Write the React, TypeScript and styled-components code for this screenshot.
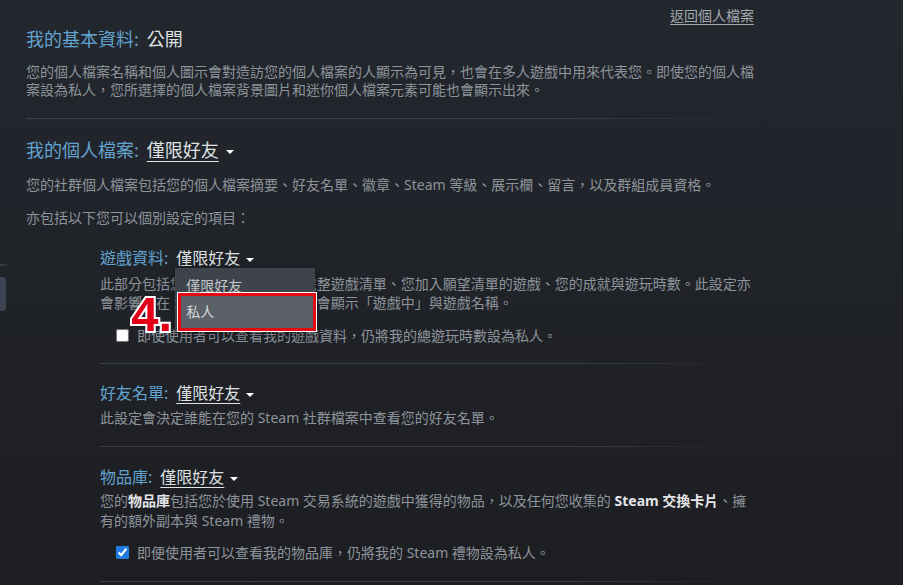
import React from "react";
import styled, { createGlobalStyle } from "styled-components";

const GlobalStyle = createGlobalStyle`
  html, body {
    margin: 0;
    padding: 0;
  }
  body {
    background: linear-gradient(to bottom, #23272e 0%, #1d1e22 100%);
    font-family: "Noto Sans", "Noto Sans CJK TC", sans-serif;
    overflow: hidden;
  }
`;

export default function App() {
  return (
    <>
      <GlobalStyle />
      <Page>
        <Rail>
          <RailLine />
          <RailTab />
        </Rail>
        <Main>
          <TopBar>
            <BackLink href="#">返回個人檔案</BackLink>
          </TopBar>

          <Heading $mt={1} $size={18}>
            <Label>我的基本資料:</Label>
            <Value>公開</Value>
          </Heading>
          <Desc $mt={12} $lh={18}>
            您的個人檔案名稱和個人圖示會對造訪您的個人檔案的人顯示為可見，也會在多人遊戲中用來代表您。即使您的個人檔
            <br />
            案設為私人，您所選擇的個人檔案背景圖片和迷你個人檔案元素可能也會顯示出來。
          </Desc>

          <Divider $mt={19} $width={728} />

          <Heading $mt={19} $size={18}>
            <Label>我的個人檔案:</Label>
            <Value $link>僅限好友</Value>
            <Caret $gap={7} />
          </Heading>
          <Desc $mt={14} $lh={18}>
            您的社群個人檔案包括您的個人檔案摘要、好友名單、徽章、Steam 等級、展示欄、留言，以及群組成員資格。
          </Desc>
          <Desc $mt={15} $lh={18}>
            亦包括以下您可以個別設定的項目：
          </Desc>

          <SubSection>
            <Heading $mt={20} $size={16}>
              <Label>遊戲資料:</Label>
              <ValueAnchor>
                <Value $link>僅限好友</Value>
                <Menu>
                  <StepMark>4.</StepMark>
                  <MenuItem>僅限好友</MenuItem>
                  <MenuItem $marked>私人</MenuItem>
                </Menu>
              </ValueAnchor>
              <Caret $gap={6} />
            </Heading>
            <Desc $mt={5} $lh={19}>
              此部分包括您的 Steam 帳戶中的完整遊戲清單、您加入願望清單的遊戲、您的成就與遊玩時數。此設定亦
              <br />
              會影響您在 Steam 聊天中好友是否會顯示「遊戲中」與遊戲名稱。
            </Desc>
            <CheckRow $mt={13}>
              <Box type="checkbox" readOnly />
              即使使用者可以查看我的遊戲資料，仍將我的總遊玩時數設為私人。
            </CheckRow>

            <Divider $mt={18} $width={640} />

            <Heading $mt={18} $size={16}>
              <Label>好友名單:</Label>
              <Value $link>僅限好友</Value>
              <Caret $gap={6} />
            </Heading>
            <Desc $mt={4} $lh={19}>
              此設定會決定誰能在您的 Steam 社群檔案中查看您的好友名單。
            </Desc>

            <Divider $mt={19} $width={640} />

            <Heading $mt={19} $size={16}>
              <Label>物品庫:</Label>
              <Value $link>僅限好友</Value>
              <Caret $gap={6} />
            </Heading>
            <Desc $mt={3} $lh={20}>
              您的<Strong>物品庫</Strong>包括您於使用 Steam 交易系統的遊戲中獲得的物品，以及任何您收集的{" "}
              <Strong>Steam 交換卡片</Strong>、擁
              <br />
              有的額外副本與 Steam 禮物。
            </Desc>
            <CheckRow $mt={11}>
              <Box type="checkbox" defaultChecked />
              即便使用者可以查看我的物品庫，仍將我的 Steam 禮物設為私人。
            </CheckRow>

            <Divider $mt={19} $width={640} />
          </SubSection>
        </Main>
      </Page>
    </>
  );
}

const Page = styled.div`
  display: flex;
  height: 585px;
  overflow: hidden;
`;

const Rail = styled.div`
  width: 7px;
  flex-shrink: 0;
  padding-top: 264px;
`;

const RailLine = styled.div`
  height: 2px;
  background: linear-gradient(to right, #3d434d, #2c3038);
`;

const RailTab = styled.div`
  margin-top: 11px;
  width: 6px;
  height: 34px;
  background: #3b4250;
  border-radius: 0 3px 3px 0;
`;

const Main = styled.main`
  padding-left: 19px;
  width: 728px;
  flex-shrink: 0;
`;

const TopBar = styled.div`
  display: flex;
  justify-content: flex-end;
  padding-top: 6px;
`;

const BackLink = styled.a`
  font-size: 14px;
  line-height: 20px;
  color: #a3a8ad;
  text-decoration: underline;
  text-underline-offset: 3px;
`;

const Heading = styled.h2<{ $mt: number; $size: number }>`
  display: flex;
  align-items: center;
  margin: ${(p) => p.$mt}px 0 0;
  font-size: ${(p) => p.$size}px;
  line-height: ${(p) => p.$size + 6}px;
  font-weight: 400;
`;

const Label = styled.span`
  color: #62a3cf;
`;

const Value = styled.span<{ $link?: boolean }>`
  margin-left: 8px;
  color: #dfe1e3;
  text-decoration: ${(p) => (p.$link ? "underline" : "none")};
  text-underline-offset: 4px;
  text-decoration-thickness: 1px;
`;

const ValueAnchor = styled.span`
  position: relative;
  display: flex;
`;

const Caret = styled.span<{ $gap: number }>`
  width: 0;
  height: 0;
  margin: 3px 0 0 ${(p) => p.$gap}px;
  border-left: 4px solid transparent;
  border-right: 4px solid transparent;
  border-top: 4px solid #ffffff;
`;

const Desc = styled.p<{ $mt: number; $lh: number }>`
  margin: ${(p) => p.$mt}px 0 0;
  font-size: 14px;
  line-height: ${(p) => p.$lh}px;
  color: #8d949b;
  white-space: nowrap;
`;

const Strong = styled.b`
  color: #e4e6e8;
  font-weight: 700;
`;

const Divider = styled.div<{ $mt: number; $width: number }>`
  margin-top: ${(p) => p.$mt}px;
  width: ${(p) => p.$width}px;
  height: 1px;
  background: linear-gradient(
    to right,
    #3b4048 0%,
    #3b4048 72%,
    rgba(59, 64, 72, 0) 100%
  );
`;

const SubSection = styled.section`
  padding-left: 74px;
`;

const CheckRow = styled.label<{ $mt: number }>`
  display: flex;
  align-items: center;
  gap: 8px;
  height: 20px;
  margin-top: ${(p) => p.$mt}px;
  padding-left: 16px;
  font-size: 14px;
  color: #8d949b;
  white-space: nowrap;
`;

const Box = styled.input`
  margin: 0;
  width: 13px;
  height: 13px;
  accent-color: #1f7ae0;
`;

const Menu = styled.div`
  position: absolute;
  top: 21px;
  left: 7px;
  width: 140px;
  padding-top: 7px;
  background: #3e434c;
  box-shadow: 0 2px 8px rgba(0, 0, 0, 0.45);
  z-index: 2;
`;

const MenuItem = styled.div<{ $marked?: boolean }>`
  height: ${(p) => (p.$marked ? 32 : 22)}px;
  line-height: ${(p) => (p.$marked ? 32 : 22)}px;
  padding-left: ${(p) => (p.$marked ? 5 : 11)}px;
  margin: ${(p) => (p.$marked ? "-4px -1px 0 3px" : "0")};
  font-size: 14px;
  color: ${(p) => (p.$marked ? "#d5d8db" : "#c2c6ca")};
  background: ${(p) => (p.$marked ? "#5b6069" : "transparent")};
  border: ${(p) => (p.$marked ? "3px solid #e10d12" : "none")};
  box-shadow: ${(p) => (p.$marked ? "0 0 0 1px #ffffff" : "none")};
`;

const StepMark = styled.span`
  position: absolute;
  left: -44px;
  top: 22px;
  font-family: "Liberation Sans", Arial, sans-serif;
  font-weight: 700;
  font-size: 49px;
  line-height: 49px;
  color: #e5001a;
  -webkit-text-stroke: 4px #ffffff;
  paint-order: stroke fill;
`;
